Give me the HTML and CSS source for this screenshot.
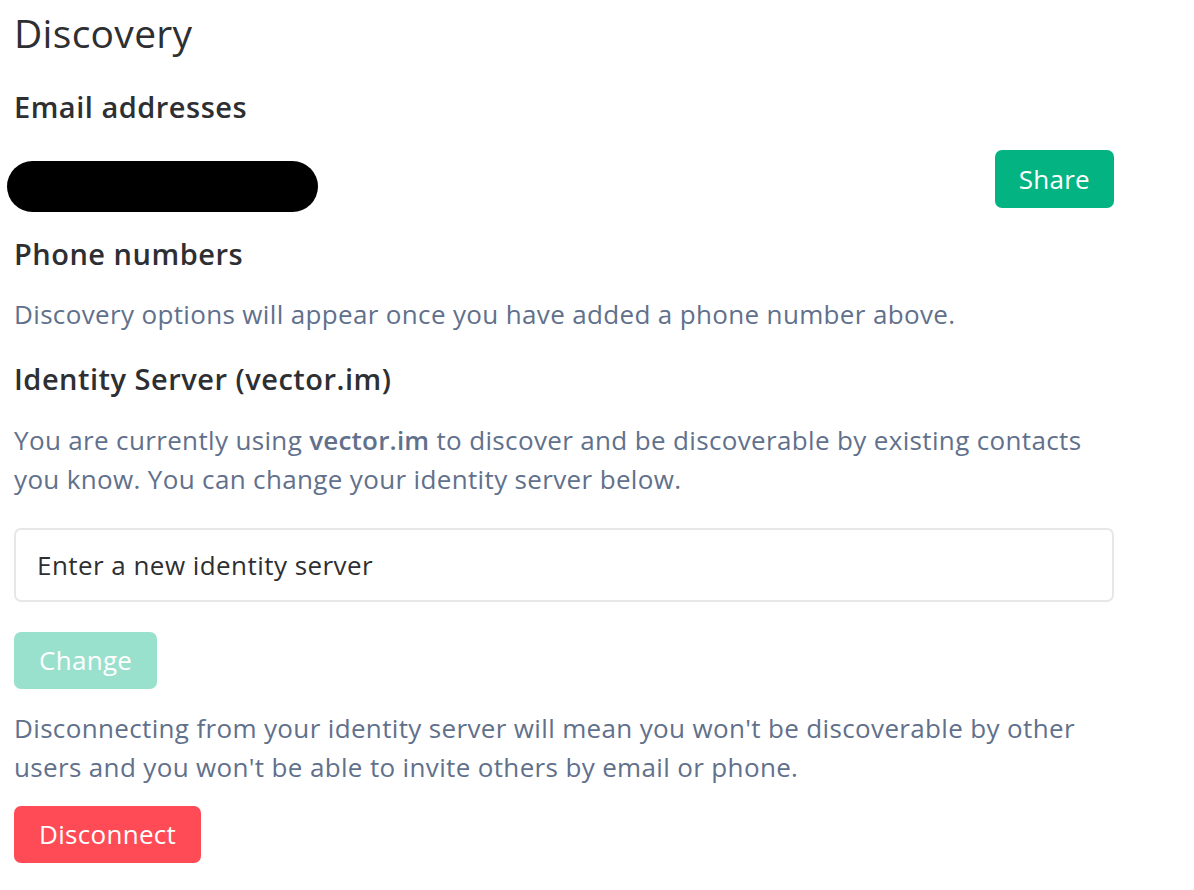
FILE: index.html
```html
<!DOCTYPE html>
<html lang="en">
<head>
<meta charset="utf-8">
<title>Discovery</title>
<link rel="stylesheet" href="styles.css">
</head>
<body>
<main class="page">
  <h2 class="title">Discovery</h2>

  <h3 class="subhead subhead-first">Email addresses</h3>
  <div class="email-row">
    <div class="redacted"></div>
    <button class="btn btn-primary">Share</button>
  </div>

  <h3 class="subhead subhead-phone">Phone numbers</h3>
  <p class="desc desc-phone">Discovery options will appear once you have added a phone number above.</p>

  <h3 class="subhead subhead-is">Identity Server (vector.im)</h3>
  <p class="desc desc-is">You are currently using <b>vector.im</b> to discover and be discoverable by existing contacts you know. You can change your identity server below.</p>

  <input class="field" type="text" placeholder="Enter a new identity server">

  <button class="btn btn-disabled">Change</button>

  <p class="desc desc-disc">Disconnecting from your identity server will mean you won't be discoverable by other users and you won't be able to invite others by email or phone.</p>

  <button class="btn btn-danger">Disconnect</button>
</main>
</body>
</html>
```

FILE: styles.css
```css
* { box-sizing: border-box; }

html, body {
  margin: 0;
  padding: 0;
  background: #ffffff;
}

body {
  font-family: "Open Sans", "Lato", sans-serif;
  color: #2e2f32;
}

.page {
  width: 1114px;
  padding: 9px 0 0 14px;
  display: flex;
  flex-direction: column;
  align-items: flex-start;
}

.title {
  margin: 0;
  font-size: 39px;
  line-height: 48px;
  font-weight: 500;
  letter-spacing: 0.3px;
  color: #2e2f32;
}

.subhead {
  margin: 0;
  font-size: 29px;
  line-height: 36px;
  font-weight: 600;
  letter-spacing: 0.5px;
  color: #2e2f32;
}

.subhead-first { margin-top: 32px; }
.subhead-phone { margin-top: 24px; }
.subhead-is { margin-top: 27px; }

.email-row {
  margin-top: 25px;
  width: 1100px;
  display: flex;
  justify-content: space-between;
  align-items: flex-start;
  height: 62px;
}

.redacted {
  margin-left: -7px;
  margin-top: 11px;
  width: 311px;
  height: 51px;
  background: #000;
  border-radius: 26px;
}

.desc {
  margin: 0;
  font-size: 26px;
  line-height: 39px;
  letter-spacing: 0.35px;
  color: #61708b;
  width: 1100px;
}

.desc b { font-weight: 600; letter-spacing: 0.2px; }

.desc-phone { margin-top: 23px; }
.desc-is { margin-top: 24px; }
.desc-disc { margin-top: 20px; }

.field {
  margin-top: 29px;
  width: 1100px;
  height: 74px;
  border: 2px solid #e7e7e7;
  border-radius: 7px;
  padding: 0 0 0 21px;
  font-family: inherit;
  font-size: 26px;
  letter-spacing: 0.45px;
  color: #2e2f32;
  background: #fff;
  outline: none;
}

.field::placeholder { color: #2e2f32; opacity: 1; }

.btn {
  font-family: inherit;
  font-size: 26px;
  line-height: 39px;
  letter-spacing: 0.3px;
  height: 57px;
  padding: 0 25px;
  border: none;
  border-radius: 7px;
  color: #ffffff;
  cursor: pointer;
}

.btn-primary {
  background: #03b381;
  height: 58px;
  padding: 0 24px;
}

.btn-disabled {
  margin-top: 30px;
  background: #9ae1cd;
}

.btn-danger {
  margin-top: 19px;
  background: #ff4b55;
}
```
